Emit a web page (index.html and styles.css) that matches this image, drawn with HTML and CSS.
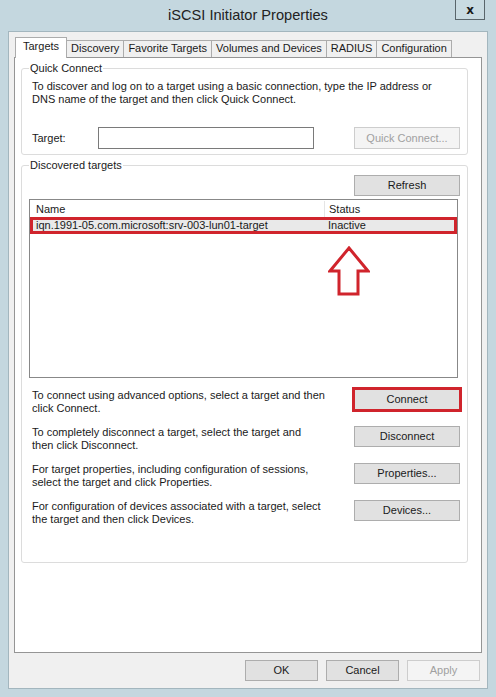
FILE: index.html
```html
<!DOCTYPE html>
<html lang="en">
<head>
    <title>iSCSI Initiator Properties</title>
    <link rel="stylesheet" href="styles.css">
</head>
<body>
<div class="window">
    <div class="titlebar">
        <span class="title">iSCSI Initiator Properties</span>
        <button class="close">x</button>
    </div>

    <div class="client">
        <div class="tabs">
            <span class="tab active">Targets</span>
            <span class="tab">Discovery</span>
            <span class="tab">Favorite Targets</span>
            <span class="tab">Volumes and Devices</span>
            <span class="tab">RADIUS</span>
            <span class="tab">Configuration</span>
        </div>

        <div class="panel">
            <fieldset class="group quick">
                <legend>Quick Connect</legend>
                <p class="info">To discover and log on to a target using a basic connection, type the IP address or<br>DNS name of the target and then click Quick Connect.</p>
                <div class="quick-row">
                    <label for="target">Target:</label>
                    <input type="text" id="target">
                    <button class="btn" disabled>Quick Connect...</button>
                </div>
            </fieldset>

            <fieldset class="group discovered">
                <legend>Discovered targets</legend>
                <button class="btn refresh">Refresh</button>

                <div class="list">
                    <div class="list-head">
                        <span class="col">Name</span>
                        <span class="col status">Status</span>
                    </div>
                    <div class="list-row">
                        <span class="col">iqn.1991-05.com.microsoft:srv-003-lun01-target</span>
                        <span class="col status">Inactive</span>
                    </div>
                    <svg class="arrow" width="42" height="50" viewBox="0 0 42 50">
                        <polygon points="21,2 40,25 30,25 30,48 11,48 11,25 2,25" fill="#fff" stroke="#d0242c" stroke-width="3"/>
                    </svg>
                </div>

                <div class="actions">
                    <div class="action">
                        <p class="info">To connect using advanced options, select a target and then<br>click Connect.</p>
                        <button class="btn marked">Connect</button>
                    </div>
                    <div class="action">
                        <p class="info">To completely disconnect a target, select the target and<br>then click Disconnect.</p>
                        <button class="btn">Disconnect</button>
                    </div>
                    <div class="action">
                        <p class="info">For target properties, including configuration of sessions,<br>select the target and click Properties.</p>
                        <button class="btn">Properties...</button>
                    </div>
                    <div class="action">
                        <p class="info">For configuration of devices associated with a target, select<br>the target and then click Devices.</p>
                        <button class="btn">Devices...</button>
                    </div>
                </div>
            </fieldset>
        </div>

        <div class="footer">
            <button class="btn small">OK</button>
            <button class="btn small">Cancel</button>
            <button class="btn small" disabled>Apply</button>
        </div>
    </div>
</div>
</body>
</html>
```

FILE: styles.css
```css
* {
    box-sizing: border-box;
}

body {
    margin: 0;
    background-color: #c4d7df;
    font-family: "Liberation Sans", Arial, sans-serif;
    font-size: 11px;
    line-height: 13px;
    color: #1a1a1a;
}

.window {
    width: 496px;
    height: 697px;
    padding: 0 8px 8px;
    display: flex;
    flex-direction: column;
}

/* title bar */
.titlebar {
    height: 31px;
    display: grid;
    grid-template-columns: 1fr auto 1fr;
    align-items: start;
}

.title {
    grid-column: 2;
    margin-top: 7px;
    font-size: 14.6px;
    line-height: 17px;
    color: #222;
}

.close {
    grid-column: 3;
    justify-self: end;
    margin-right: 3px;
    width: 30px;
    height: 20px;
    padding: 0;
    background: #c9dbe2;
    border: 1px solid #59656b;
    border-top: none;
    font-family: "DejaVu Sans", sans-serif;
    font-size: 12px;
    font-weight: 700;
    color: #1a1a1a;
}

/* dialog area */
.client {
    height: 658px;
    background: #f0f0f0;
    border: 1px solid #a3b6be;
    padding: 5px 5px 0;
}

.tabs {
    display: flex;
    align-items: flex-end;
    height: 20px;
    padding-left: 1px;
}

.tab {
    height: 17px;
    padding: 1px 4px 0;
    border: 1px solid #acacac;
    border-bottom: none;
    border-left: none;
    background: #f0f0f0;
    white-space: nowrap;
}

.tab.active {
    position: relative;
    z-index: 1;
    height: 21px;
    margin-bottom: -1px;
    padding: 2px 7px 0;
    border-left: 1px solid #acacac;
    background: #fff;
}

.panel {
    height: 596px;
    background: #fff;
    border: 1px solid #959595;
    padding: 4px 0 0 6px;
}

/* group boxes */
.group {
    width: 447px;
    margin: 0;
    padding: 5px 7px;
    border: 1px solid #dcdcdc;
    border-radius: 3px;
}

.group legend {
    padding: 0 1px;
    margin-left: 0;
}

.discovered {
    margin-top: 4px;
    padding-top: 3px;
    padding-bottom: 36px;
}

.info {
    margin: 0;
    padding-left: 3px;
}

.quick-row {
    display: flex;
    align-items: center;
    margin-top: 21px;
}

.quick-row label {
    width: 69px;
    padding-left: 3px;
}

.quick-row input {
    width: 216px;
    height: 22px;
    border: 1px solid #7a7a7a;
    font: inherit;
}

.quick-row .btn {
    margin-left: auto;
    height: 22px;
}

/* buttons */
.btn {
    width: 106px;
    height: 21px;
    padding: 0;
    font: inherit;
    color: #1a1a1a;
    background: #e1e1e1;
    border: 1px solid #adadad;
}

.btn:disabled {
    color: #a0a0a0;
    background: #f4f4f4;
    border-color: #cdcdcd;
}

.btn.marked {
    outline: 3px solid #d0242c;
    outline-offset: -1px;
}

.refresh {
    display: block;
    margin-left: auto;
}

/* target list */
.list {
    position: relative;
    width: 429px;
    height: 179px;
    margin-top: 3px;
    border: 1px solid #888;
    background: #fff;
}

.list-head,
.list-row {
    display: grid;
    grid-template-columns: 294px 1fr;
    height: 17px;
    align-items: center;
}

.list-head .col {
    height: 16px;
    padding-top: 2px;
}

.col {
    padding-left: 6px;
    white-space: nowrap;
}

.col.status {
    padding-left: 4px;
}

.list-head .status {
    border-left: 1px solid #e5e5e5;
}

.list-row {
    background: #e9e9e9;
    box-shadow: inset 0 0 0 3px #d0242c;
}

.arrow {
    position: absolute;
    left: 298px;
    top: 46px;
}

/* connect / disconnect / properties / devices */
.actions {
    display: flex;
    flex-direction: column;
    gap: 11px;
    margin-top: 11px;
}

.action {
    display: flex;
    justify-content: space-between;
    align-items: flex-start;
}

/* OK / Cancel / Apply */
.footer {
    display: flex;
    justify-content: flex-end;
    gap: 8px;
    margin-top: 7px;
    padding-right: 2px;
}

.btn.small {
    width: 73px;
}
```
